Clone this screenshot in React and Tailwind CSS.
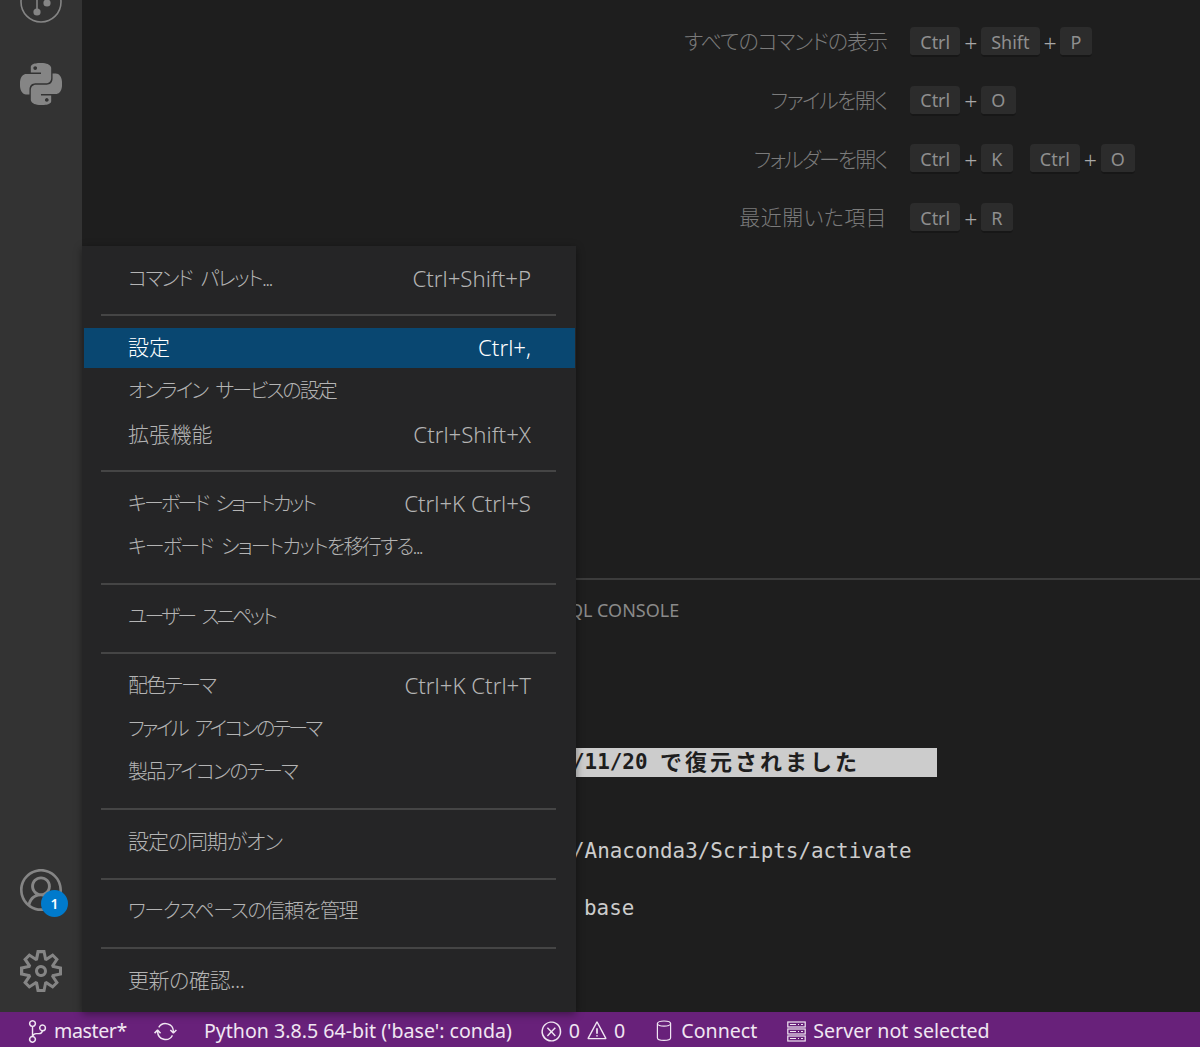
import { SiPython } from 'react-icons/si'
import { VscAccount, VscSettingsGear, VscSourceControl, VscSync, VscError, VscWarning } from 'react-icons/vsc'

const UI_FONT = "font-['Noto_Sans','Noto_Sans_CJK_JP',sans-serif] [font-feature-settings:'palt']"

const SHORTCUTS = [
  { label: 'すべてのコマンドの表示', tracking: 'tracking-[-1px]', keys: [['Ctrl', 'Shift', 'P']] },
  { label: 'ファイルを開く', tracking: 'tracking-[-1.6px]', keys: [['Ctrl', 'O']] },
  { label: 'フォルダーを開く', tracking: 'tracking-[-1.9px]', keys: [['Ctrl', 'K'], ['Ctrl', 'O']] },
  { label: '最近開いた項目', tracking: 'tracking-[0.4px]', keys: [['Ctrl', 'R']] },
]

// kana in the reference font runs narrower than in Noto, so each label is tuned to its width
const MENU = [
  { label: 'コマンド パレット...', hint: 'Ctrl+Shift+P', fit: 'text-[20px] tracking-[-1.6px]' },
  null,
  { label: '設定', hint: 'Ctrl+,', active: true },
  { label: 'オンライン サービスの設定', fit: 'text-[20px] tracking-[-1.95px]' },
  { label: '拡張機能', fit: 'tracking-[0.2px]', hint: 'Ctrl+Shift+X' },
  null,
  { label: 'キーボード ショートカット', hint: 'Ctrl+K Ctrl+S', fit: 'text-[20px] tracking-[-2.7px]' },
  { label: 'キーボード ショートカットを移行する...', fit: 'text-[20px] tracking-[-1.75px]' },
  null,
  { label: 'ユーザー スニペット', fit: 'text-[20px] tracking-[-2.9px]' },
  null,
  { label: '配色テーマ', hint: 'Ctrl+K Ctrl+T', fit: 'text-[20px] tracking-[-1.7px]' },
  { label: 'ファイル アイコンのテーマ', fit: 'text-[20px] tracking-[-2.6px]' },
  { label: '製品アイコンのテーマ', fit: 'text-[20px] tracking-[-1.8px]' },
  null,
  { label: '設定の同期がオン', fit: 'tracking-[-1.1px]' },
  null,
  { label: 'ワークスペースの信頼を管理', fit: 'text-[20px] tracking-[-1.3px]' },
  null,
  { label: '更新の確認...', fit: 'tracking-[-0.4px]' },
]

function Chord({ keys }) {
  return (
    <div className="flex items-center">
      {keys.map((k, i) => (
        <div key={i} className="flex items-center">
          {i > 0 && <span className="w-[20.5px] pt-[2px] text-center text-[23px] font-light text-[#a8a8a8]">+</span>}
          <kbd className="flex h-[30px] items-center rounded-[4px] border-b-2 border-[#171717] bg-[#2c2c2c] px-[10.25px] pt-[2px] font-['Noto_Sans',sans-serif] text-[18px] font-normal text-[#8f8f8f]">
            {k}
          </kbd>
        </div>
      ))}
    </div>
  )
}

function GitGraphIcon() {
  return (
    <svg width="42" height="24" viewBox="0 0 42 24" fill="none" className="text-[#858585]">
      <circle cx="21" cy="2" r="20" stroke="currentColor" strokeWidth="1.6" />
      <line x1="17" y1="0" x2="17" y2="12" stroke="currentColor" strokeWidth="1.6" />
      <circle cx="17" cy="12" r="3.6" fill="currentColor" />
      <circle cx="27" cy="3" r="3.6" fill="currentColor" />
    </svg>
  )
}

function DatabaseIcon() {
  return (
    <svg width="16" height="22" viewBox="0 0 16 22" fill="none" stroke="currentColor" strokeWidth="1.2">
      <ellipse cx="8" cy="3.6" rx="6.6" ry="2.6" />
      <path d="M1.4 3.6v14.2c0 1.5 3 2.6 6.6 2.6s6.6-1.1 6.6-2.6V3.6" />
    </svg>
  )
}

function ServerIcon() {
  return (
    <svg width="19" height="21" viewBox="0 0 19 21" fill="none" stroke="currentColor" strokeWidth="1.2">
      <rect x="0.8" y="1" width="17.4" height="5" />
      <rect x="0.8" y="8" width="17.4" height="5" />
      <rect x="0.8" y="15" width="17.4" height="5" />
      <path d="M3 3.5h6M11 3.5h1M14 3.5h2M3 10.5h6M11 10.5h1M14 10.5h2M3 17.5h6M11 17.5h1M14 17.5h2" />
    </svg>
  )
}

export default function App() {
  return (
    <div className={`relative flex h-[1047px] w-[1200px] flex-col overflow-hidden bg-[#1e1e1e] ${UI_FONT}`}>
      <div className="flex min-h-0 flex-1">
        {/* Activity bar */}
        <div className="flex w-[82px] shrink-0 flex-col items-center justify-between bg-[#333333] pb-[20px] text-[#858585]">
          <div className="flex flex-col items-center">
            <GitGraphIcon />
            <SiPython size={42} className="mt-[39px]" />
          </div>
          <div className="flex flex-col items-center gap-[39px]">
            <div className="relative">
              <VscAccount size={42} />
              <span className="absolute -bottom-[6px] -right-[6px] flex h-[27px] w-[27px] items-center justify-center rounded-full bg-[#007acc] text-[14px] font-semibold text-white">
                1
              </span>
            </div>
            <VscSettingsGear size={42} />
          </div>
        </div>

        {/* Editor + panel */}
        <div className="flex min-w-0 flex-1 flex-col">
          <div className="flex h-[578px] shrink-0 flex-col gap-[28.7px] pt-[27px]">
            {SHORTCUTS.map((s) => (
              <div key={s.label} className="flex h-[30px] items-center">
                <div className={`w-[805px] shrink-0 text-right text-[21px] font-light text-[#7b7b7b] ${s.tracking}`}>{s.label}</div>
                <div className="ml-[23px] flex items-center gap-[17px]">
                  {s.keys.map((chord, i) => (
                    <Chord key={i} keys={chord} />
                  ))}
                </div>
              </div>
            ))}
          </div>

          <div className="flex-1 border-t-2 border-[#3c3c3c]">
            <div className="pt-[17px] pl-[477px] text-[18px] leading-[26px] text-[#8a8a8a]">SQL CONSOLE</div>
            <div className="pl-[490px] font-['DejaVu_Sans_Mono','Noto_Sans_CJK_JP',monospace] text-[20.9px] leading-[29px] text-[#cccccc] [font-feature-settings:normal]">
              <div className="mt-[125px] flex h-[29px] w-[365px] items-center whitespace-pre bg-[#cccccc] font-bold text-[#1e1e1e]">
                {'/11/20 '}
                <span className="text-[22px] leading-none tracking-[3px]">で復元されました</span>
              </div>
              <div className="mt-[60px] whitespace-pre">/Anaconda3/Scripts/activate</div>
              <div className="mt-[28px] pl-[12px] whitespace-pre">base</div>
            </div>
          </div>
        </div>
      </div>

      {/* Status bar */}
      <div className="flex h-[35px] shrink-0 items-center bg-[#68217a] pl-[26px] pt-[3px] text-[19.6px] text-[#f0e6f2]">
        <VscSourceControl size={23} />
        <span className="ml-[5px] tracking-[-0.4px]">master*</span>
        <VscSync size={23} className="ml-[27px]" />
        <span className="ml-[27px]">Python 3.8.5 64-bit ('base': conda)</span>
        <VscError size={23} className="ml-[28px]" />
        <span className="ml-[6px]">0</span>
        <VscWarning size={22} className="ml-[6px]" />
        <span className="ml-[6px]">0</span>
        <span className="ml-[31px]"><DatabaseIcon /></span>
        <span className="ml-[9px]">Connect</span>
        <span className="ml-[30px]"><ServerIcon /></span>
        <span className="ml-[7px]">Server not selected</span>
      </div>

      {/* Gear menu */}
      <div className="absolute left-[82px] top-[246px] h-[766px] w-[494px] bg-[#252526] pt-[11px] text-[21px] font-light text-[#b4b4b4] [word-spacing:5px] shadow-[0_2px_8px_rgba(0,0,0,0.4)]">
        {MENU.map((item, i) =>
          item === null ? (
            <div key={i} className="h-[26.3px] pl-[19px] pr-[20px] pt-[14px]">
              <div className="h-[2px] bg-[#454545]" />
            </div>
          ) : (
            <div key={i} className="flex h-[43.2px] items-center pl-[2px] pr-[1px]">
              <div
                className={`flex h-[40px] flex-1 items-center justify-between px-[44px] ${
                  item.active ? 'bg-[#094771] text-white' : ''
                }`}
              >
                <span className={item.fit}>{item.label}</span>
                {item.hint && <span className="text-[22.2px] [word-spacing:0]">{item.hint}</span>}
              </div>
            </div>
          )
        )}
      </div>
    </div>
  )
}
